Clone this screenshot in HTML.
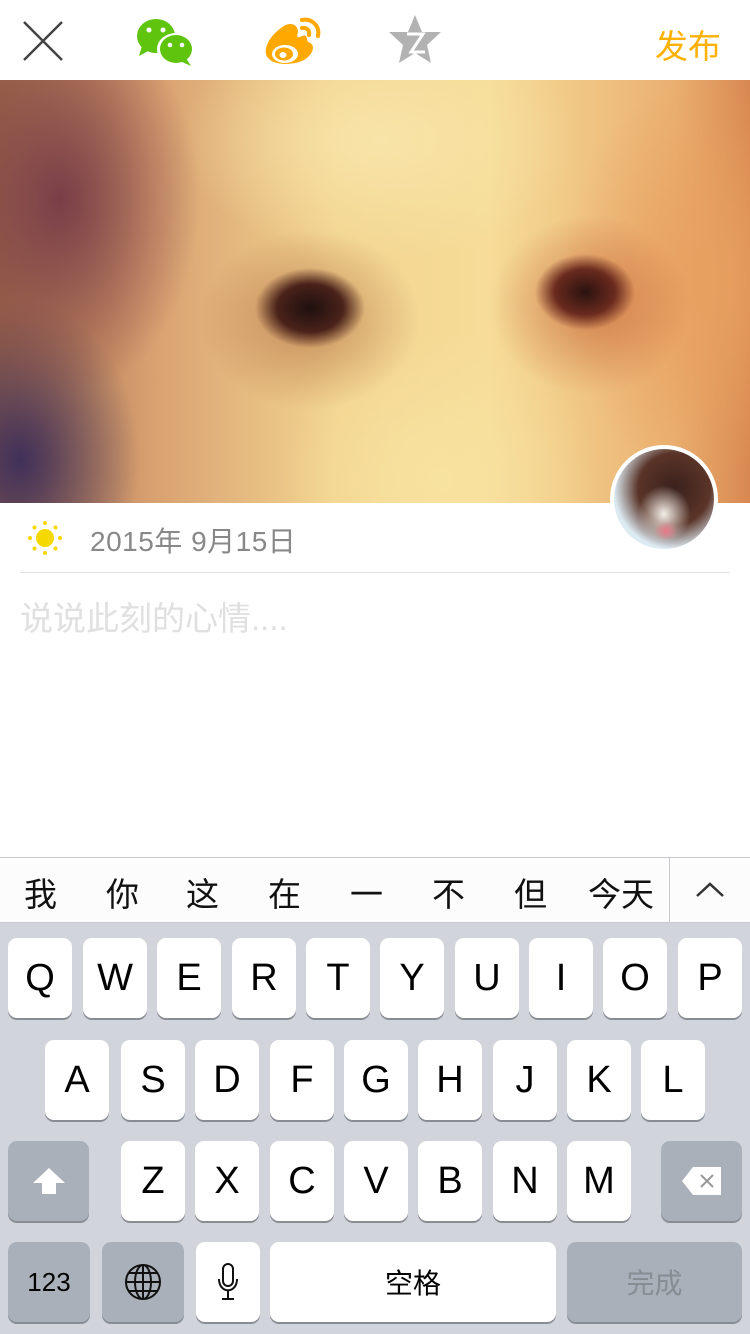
<!DOCTYPE html>
<html><head><meta charset="utf-8"><style>
*{margin:0;padding:0;box-sizing:border-box}
body{width:750px;height:1334px;background:#fff;position:relative;overflow:hidden;font-family:"Liberation Sans","Noto Sans CJK SC",sans-serif}
.abs{position:absolute}
.photo{left:0;top:80px;width:750px;height:423px;background:
radial-gradient(ellipse 55px 40px at 310px 228px,#1e100e 0%,#4a221a 60%,rgba(90,40,30,0) 100%),
radial-gradient(ellipse 50px 38px at 585px 212px,#2a1210 0%,#6a2a1e 60%,rgba(100,40,30,0) 100%),
radial-gradient(ellipse 110px 90px at 310px 240px,rgba(170,100,60,.6),rgba(150,80,50,0)),
radial-gradient(ellipse 100px 90px at 590px 225px,rgba(190,90,50,.6),rgba(170,70,40,0)),
radial-gradient(ellipse 160px 150px at 440px 400px,#f8e2a0,rgba(248,226,160,0)),
radial-gradient(ellipse 140px 200px at 60px 120px,#7a3e48,rgba(122,62,72,0)),
radial-gradient(ellipse 120px 160px at 20px 380px,#40305a,rgba(64,48,90,0)),
radial-gradient(ellipse 140px 200px at 700px 200px,#e8a060,rgba(232,160,96,0)),
radial-gradient(ellipse 200px 120px at 380px 60px,#f8e4a8,rgba(248,228,168,0)),
linear-gradient(90deg,#a06848 0%,#d8a070 20%,#f2d490 45%,#f6dc98 65%,#eab070 90%,#d88850 100%)}
.key{position:absolute;background:#fff;border-radius:9px;box-shadow:0 2px 0 #888c93;font-size:38px;color:#000;display:flex;align-items:center;justify-content:center;height:80px;width:64px}
.dk{background:#aab0b9}
</style></head><body>
<svg class="abs" style="left:22px;top:20px" width="42" height="42"><path d="M2 2L40 40M40 2L2 40" stroke="#444" stroke-width="2.5"/></svg>
<svg class="abs" style="left:134px;top:16px" width="64" height="52">
<ellipse cx="22" cy="20" rx="19" ry="17" fill="#5ec40e"/><path d="M8 30L5 40 16 34z" fill="#5ec40e"/>
<ellipse cx="42" cy="33" rx="19" ry="16" fill="#fff"/>
<ellipse cx="42" cy="33" rx="16" ry="14" fill="#5ec40e"/><path d="M52 42L57 50 46 45z" fill="#5ec40e"/>
<circle cx="15" cy="14" r="2.5" fill="#fff"/><circle cx="29" cy="14" r="2.5" fill="#fff"/>
<circle cx="36" cy="29" r="2.3" fill="#fff"/><circle cx="48" cy="29" r="2.3" fill="#fff"/></svg>
<svg class="abs" style="left:262px;top:14px" width="64" height="52">
<path d="M22 12C12 18 2 30 4 40 7 52 30 52 42 46 52 40 54 30 46 28 44 24 46 20 40 22 36 24 34 24 36 18 36 10 28 8 22 12z" fill="#ffa800"/>
<ellipse cx="23" cy="40" rx="13" ry="9" fill="#fff"/><ellipse cx="22" cy="40" rx="9" ry="6.5" fill="#ffa800"/><ellipse cx="21" cy="41" rx="3.5" ry="3" fill="#fff"/>
<path d="M40 6C50 4 58 12 56 22M40 14C45 13 48 17 47 21" stroke="#ffa800" stroke-width="4" fill="none" stroke-linecap="round"/></svg>
<svg class="abs" style="left:387px;top:14px" width="56" height="50"><path d="M28 1L35 18 54 18 40 31 44 49 28 39 12 49 16 31 2 18 21 18z" fill="#b2b2b2"/><path d="M20 20H36L24 38H38" stroke="#fff" stroke-width="3" fill="none"/></svg>
<div class="abs" style="left:655px;top:20px;font-size:33px;color:#ffb000">发布</div>
<div class="abs photo"></div>
<div class="abs" style="left:610px;top:445px;width:108px;height:108px;border-radius:50%;background:#fff;padding:4px"><div style="width:100%;height:100%;border-radius:50%;background:radial-gradient(ellipse 12px 10px at 52px 82px,#e87a8a,rgba(232,122,138,0)),radial-gradient(ellipse 28px 30px at 50px 65px,#f4efe8,rgba(240,235,230,0) 95%),radial-gradient(ellipse 60px 60px at 60px 40px,#3a201c,#5a3428 60%,#dceaf2 100%)"></div></div>
<svg class="abs" style="left:27px;top:520px" width="36" height="36"><circle cx="18" cy="18" r="9" fill="#f5d800"/><g fill="#f5d800"><circle cx="18" cy="3" r="2"/><circle cx="18" cy="33" r="2"/><circle cx="3" cy="18" r="2"/><circle cx="33" cy="18" r="2"/><circle cx="7.5" cy="7.5" r="2"/><circle cx="28.5" cy="7.5" r="2"/><circle cx="7.5" cy="28.5" r="2"/><circle cx="28.5" cy="28.5" r="2"/></g></svg>
<div class="abs" style="left:90px;top:520px;font-size:28px;color:#888;letter-spacing:0.5px">2015年 9月15日</div>
<div class="abs" style="left:20px;top:572px;width:710px;height:1px;background:#e2e2e2"></div>
<div class="abs" style="left:20px;top:592px;font-size:33px;color:#e0e0e0">说说此刻的心情....</div>
<div class="abs" style="left:0;top:857px;width:750px;height:66px;background:#fcfcfd;border-top:1px solid #c8cacd;border-bottom:1px solid #c8cacd"></div>
<div class="abs" style="left:0;top:868px;font-size:33px;color:#111;width:670px">
<span style="position:absolute;left:24px">我</span><span style="position:absolute;left:106px">你</span><span style="position:absolute;left:186px">这</span><span style="position:absolute;left:268px">在</span><span style="position:absolute;left:350px">一</span><span style="position:absolute;left:432px">不</span><span style="position:absolute;left:514px">但</span><span style="position:absolute;left:588px">今天</span></div>
<div class="abs" style="left:669px;top:858px;width:1px;height:64px;background:#c8cacd"></div>
<svg class="abs" style="left:694px;top:880px" width="32" height="20"><path d="M3 16L16 4 29 16" stroke="#333" stroke-width="2.5" fill="none"/></svg>
<div class="abs" style="left:0;top:923px;width:750px;height:411px;background:#d1d5db"></div>
<div class="key" style="left:8px;top:938px">Q</div><div class="key" style="left:83px;top:938px">W</div><div class="key" style="left:157px;top:938px">E</div><div class="key" style="left:232px;top:938px">R</div><div class="key" style="left:306px;top:938px">T</div><div class="key" style="left:380px;top:938px">Y</div><div class="key" style="left:455px;top:938px">U</div><div class="key" style="left:529px;top:938px">I</div><div class="key" style="left:603px;top:938px">O</div><div class="key" style="left:678px;top:938px">P</div>
<div class="key" style="left:45px;top:1040px">A</div><div class="key" style="left:121px;top:1040px">S</div><div class="key" style="left:195px;top:1040px">D</div><div class="key" style="left:270px;top:1040px">F</div><div class="key" style="left:344px;top:1040px">G</div><div class="key" style="left:418px;top:1040px">H</div><div class="key" style="left:493px;top:1040px">J</div><div class="key" style="left:567px;top:1040px">K</div><div class="key" style="left:641px;top:1040px">L</div>
<div class="key dk" style="left:8px;top:1141px;width:81px"><svg width="36" height="30"><path d="M18 2L34 17H25V28H11V17H2Z" fill="#fff"/></svg></div>
<div class="key" style="left:121px;top:1141px">Z</div><div class="key" style="left:195px;top:1141px">X</div><div class="key" style="left:270px;top:1141px">C</div><div class="key" style="left:344px;top:1141px">V</div><div class="key" style="left:418px;top:1141px">B</div><div class="key" style="left:493px;top:1141px">N</div><div class="key" style="left:567px;top:1141px">M</div>
<div class="key dk" style="left:661px;top:1141px;width:81px"><svg width="42" height="30"><path d="M12 1H40V29H12L1 15Z" fill="#fff"/><path d="M20 9L32 21M32 9L20 21" stroke="#999" stroke-width="2"/></svg></div>
<div class="key dk" style="left:8px;top:1242px;width:82px;font-size:26px">123</div>
<div class="key dk" style="left:102px;top:1242px;width:82px"><svg width="38" height="38" fill="none" stroke="#111" stroke-width="2"><circle cx="19" cy="19" r="17"/><ellipse cx="19" cy="19" rx="8" ry="17"/><path d="M19 2V36M2 19H36M5 10H33M5 28H33"/></svg></div>
<div class="key" style="left:196px;top:1242px"><svg width="22" height="38" fill="none" stroke="#111" stroke-width="2"><rect x="6" y="1" width="10" height="22" rx="5"/><path d="M2 16C2 31 20 31 20 16M11 28V36M5 36H17"/></svg></div>
<div class="key" style="left:270px;top:1242px;width:286px;font-size:28px">空格</div>
<div class="key dk" style="left:567px;top:1242px;width:175px;font-size:28px;color:#888c93">完成</div>
</body></html>
